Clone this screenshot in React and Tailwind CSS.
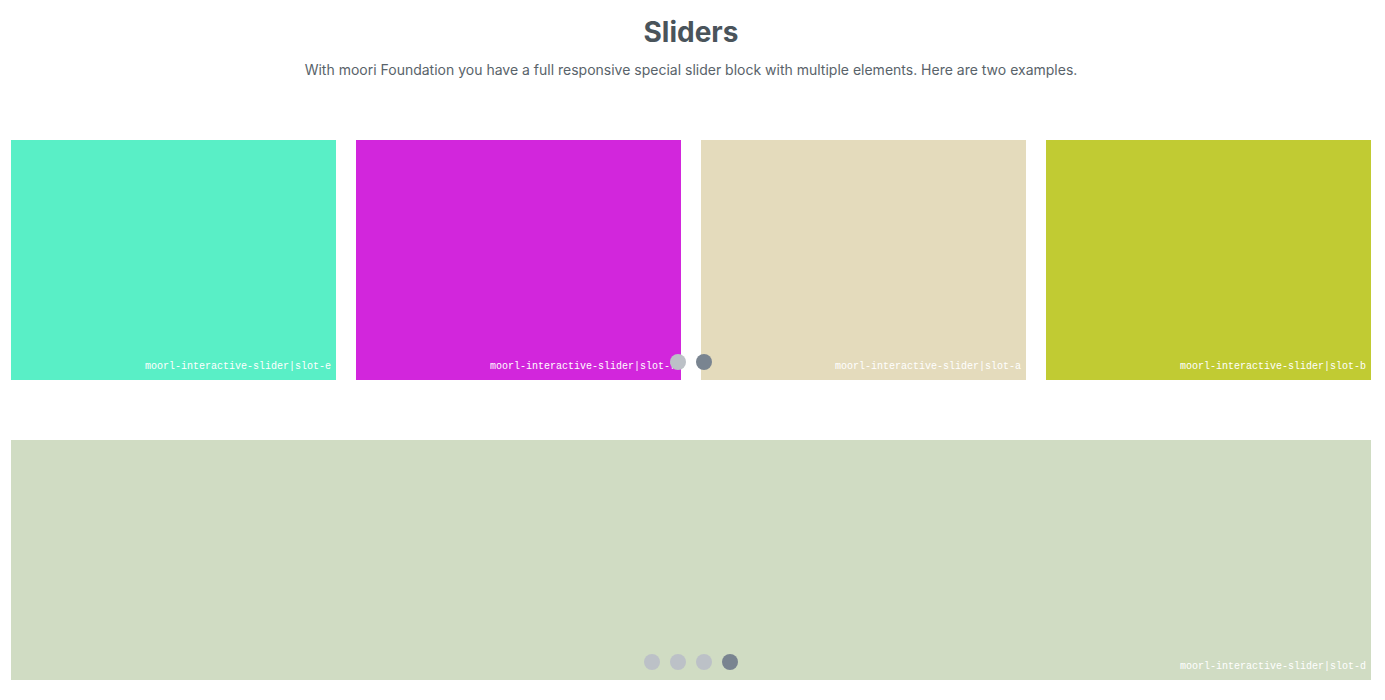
const slides = [
  { slot: "e", color: "bg-[#59efc6]" },
  { slot: "f", color: "bg-[#d226dc]" },
  { slot: "a", color: "bg-[#e4dbbc]" },
  { slot: "b", color: "bg-[#c1cb33]" },
];

function Slide({ slot, color }) {
  return (
    <div className={`flex h-60 min-w-0 flex-1 items-end justify-end pr-[5px] pb-1 ${color}`}>
      <span className="font-['Liberation_Mono',monospace] text-[10px] leading-[18px] text-white">
        moorl-interactive-slider|slot-{slot}
      </span>
    </div>
  );
}

function Dots({ count, active }) {
  return (
    <div className="absolute inset-x-0 bottom-[10px] flex justify-center gap-[10px]">
      {Array.from({ length: count }, (_, i) => (
        <button
          key={i}
          type="button"
          aria-label={`Go to slide ${i + 1}`}
          className={`size-4 rounded-full ${i === active ? "bg-[#798490]" : "bg-[#bcc1c7]"}`}
        />
      ))}
    </div>
  );
}

export default function App() {
  return (
    <main className="bg-white pr-[14px] pb-5 pl-[11px] font-['Inter',sans-serif] text-[#4a545b]">
      <header className="pt-[14px] pb-[60px] text-center">
        <h1 className="text-[28px] leading-9 font-bold">Sliders</h1>
        <p className="mt-[10px] text-[14px] leading-5 text-[#59636a]">
          With moori Foundation you have a full responsive special slider block with multiple elements. Here are two examples.
        </p>
      </header>
      <section aria-label="Slider with four columns" className="relative">
        <div className="flex gap-5">
          {slides.map((s) => (
            <Slide key={s.slot} {...s} />
          ))}
        </div>
        <Dots count={2} active={1} />
      </section>
      <section aria-label="Single slide slider" className="relative mt-[60px] flex">
        <Slide slot="d" color="bg-[#d0dcc3]" />
        <Dots count={4} active={3} />
      </section>
    </main>
  );
}
